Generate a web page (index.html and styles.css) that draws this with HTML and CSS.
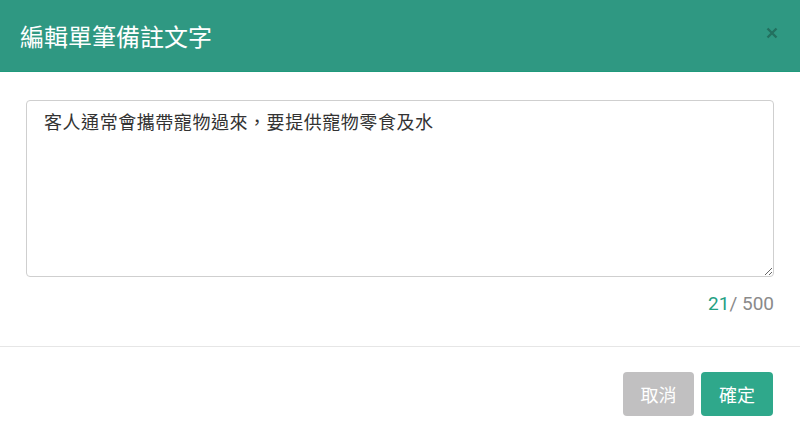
FILE: index.html
```html
<!DOCTYPE html>
<html lang="zh-Hant">
<head>
<meta charset="utf-8">
<link rel="stylesheet" href="styles.css">
</head>
<body>
<div class="modal">
  <header class="modal-header">
    <h1 class="modal-title">編輯單筆備註文字</h1>
    <button class="close" aria-label="close">
      <svg width="12" height="12" viewBox="0 0 12 12"><path d="M1.5 1.5 L10.5 10.5 M10.5 1.5 L1.5 10.5" stroke="currentColor" stroke-width="2.4" stroke-linecap="butt"/></svg>
    </button>
  </header>
  <section class="modal-body">
    <textarea class="note">客人通常會攜帶寵物過來，要提供寵物零食及水</textarea>
    <div class="counter"><span class="count">21</span>/ 500</div>
  </section>
  <footer class="modal-footer">
    <button class="btn btn-cancel">取消</button>
    <button class="btn btn-ok">確定</button>
  </footer>
</div>
</body>
</html>
```
FILE: styles.css
```css
html, body {
  margin: 0;
  padding: 0;
  background: #ffffff;
  font-family: Roboto, "Noto Sans CJK TC", "Noto Sans", sans-serif;
}
.modal {
  width: 800px;
  height: 434px;
  display: flex;
  flex-direction: column;
}
.modal-header {
  height: 71px;
  background: #2f9882;
  border-bottom: 1px solid #1f9a7c;
  display: flex;
  align-items: center;
  justify-content: space-between;
  padding: 0 22px 0 20px;
  box-sizing: content-box;
}
.modal-title {
  margin: 0;
  color: #ffffff;
  font-size: 24px;
  font-weight: 400;
  letter-spacing: 0;
  margin-bottom: 1px;
}
.close {
  border: 0;
  background: none;
  padding: 0;
  color: #23705f;
  display: flex;
  margin-bottom: 5px;
}
.modal-body {
  padding: 28px 26px 0 26px;
  display: flex;
  flex-direction: column;
}
.note {
  height: 177px;
  box-sizing: border-box;
  border: 1px solid #cfcfcf;
  border-radius: 4px;
  padding: 9px 17px;
  font-family: Roboto, "Noto Sans CJK TC", sans-serif;
  font-size: 18px;
  letter-spacing: 0.55px;
  line-height: 26px;
  color: #333333;
  resize: vertical;
  margin: 0;
}
.counter {
  text-align: right;
  margin-top: 15px;
  font-size: 19px;
  line-height: 24px;
  color: #8a8a8a;
}
.count {
  color: #24a083;
}
.modal-footer {
  margin-top: 30px;
  border-top: 1px solid #e6e6e6;
  display: flex;
  justify-content: flex-end;
  gap: 7px;
  padding: 25px 27px 0 0;
}
.btn {
  height: 44px;
  width: 72px;
  border: 0;
  border-radius: 4px;
  color: #ffffff;
  font-family: Roboto, "Noto Sans CJK TC", sans-serif;
  font-size: 18px;
  padding: 0;
}
.btn-cancel {
  background: #c1c0c1;
  width: 71px;
}
.btn-ok {
  background: #2fa88b;
}
```
